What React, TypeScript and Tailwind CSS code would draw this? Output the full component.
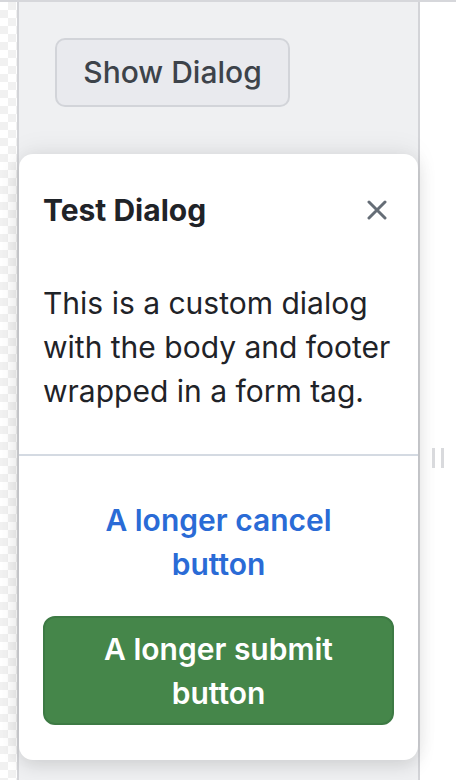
import React from "react";

const font = { fontFamily: "Inter, 'Noto Sans', sans-serif" };

function CloseIcon() {
  return (
    <svg width="20" height="20" viewBox="0 0 20 20" fill="none">
      <path d="M2 2 18 18M18 2 2 18" stroke="#656d76" strokeWidth="3" strokeLinecap="round" />
    </svg>
  );
}

export default function App() {
  return (
    <div className="flex h-[780px] w-[456px] border-t-2 border-[#d6d7db] bg-white overflow-hidden" style={font}>
      {/* transparency strip */}
      <div className="w-[17px] shrink-0 bg-[image:repeating-conic-gradient(#f1f1f1_0%_25%,#ffffff_0%_50%)] bg-[length:16px_16px]" />

      {/* preview panel */}
      <div className="flex w-[403px] shrink-0 flex-col border-x-2 border-[#d3d4d8] bg-[#eff0f2]">
        <div className="pl-[36px] pt-[36px]">
          <button className="h-[69px] w-[235px] rounded-[10px] border-2 border-[#d2d4d9] bg-[#e9eaee] text-[30px] font-medium text-[#3d434a]">
            Show Dialog
          </button>
        </div>

        <div className="mt-[47px] rounded-[14px] bg-white shadow-[0_-6px_24px_rgba(0,0,0,0.05),0_6px_18px_rgba(0,0,0,0.12)]">
          <div className="flex items-center justify-between pl-[24px] pr-[31px] pt-[36px]">
            <h2 className="text-[30px] font-bold leading-[40px] text-[#1f2328]">Test Dialog</h2>
            <CloseIcon />
          </div>
          <div className="px-[24px] pt-[51px] pb-[41px] text-[30px] leading-[44px] text-[#1f2328]">
            This is a custom dialog with the body and footer wrapped in a form tag.
          </div>
          <div className="flex flex-col gap-[20px] border-t-2 border-[#d4dae2] px-[24px] pt-[31px] pb-[35px]">
            <button className="rounded-[12px] border-2 border-transparent px-[40px] pt-[9px] pb-[8px] text-[30px] font-semibold leading-[44px] text-[#2a6bd6]">
              A longer cancel button
            </button>
            <button className="rounded-[12px] border-2 border-[#3d7a44] bg-[#45864a] px-[40px] pt-[9px] pb-[8px] text-[30px] font-semibold leading-[44px] text-white">
              A longer submit button
            </button>
          </div>
        </div>
      </div>

      {/* resize handle */}
      <div className="flex flex-1 justify-center pt-[446px]">
        <div className="flex h-[20px] gap-[6px]">
          <div className="h-[20px] w-[3px] bg-[#d9dadd]" />
          <div className="h-[20px] w-[3px] bg-[#d9dadd]" />
        </div>
      </div>
    </div>
  );
}
